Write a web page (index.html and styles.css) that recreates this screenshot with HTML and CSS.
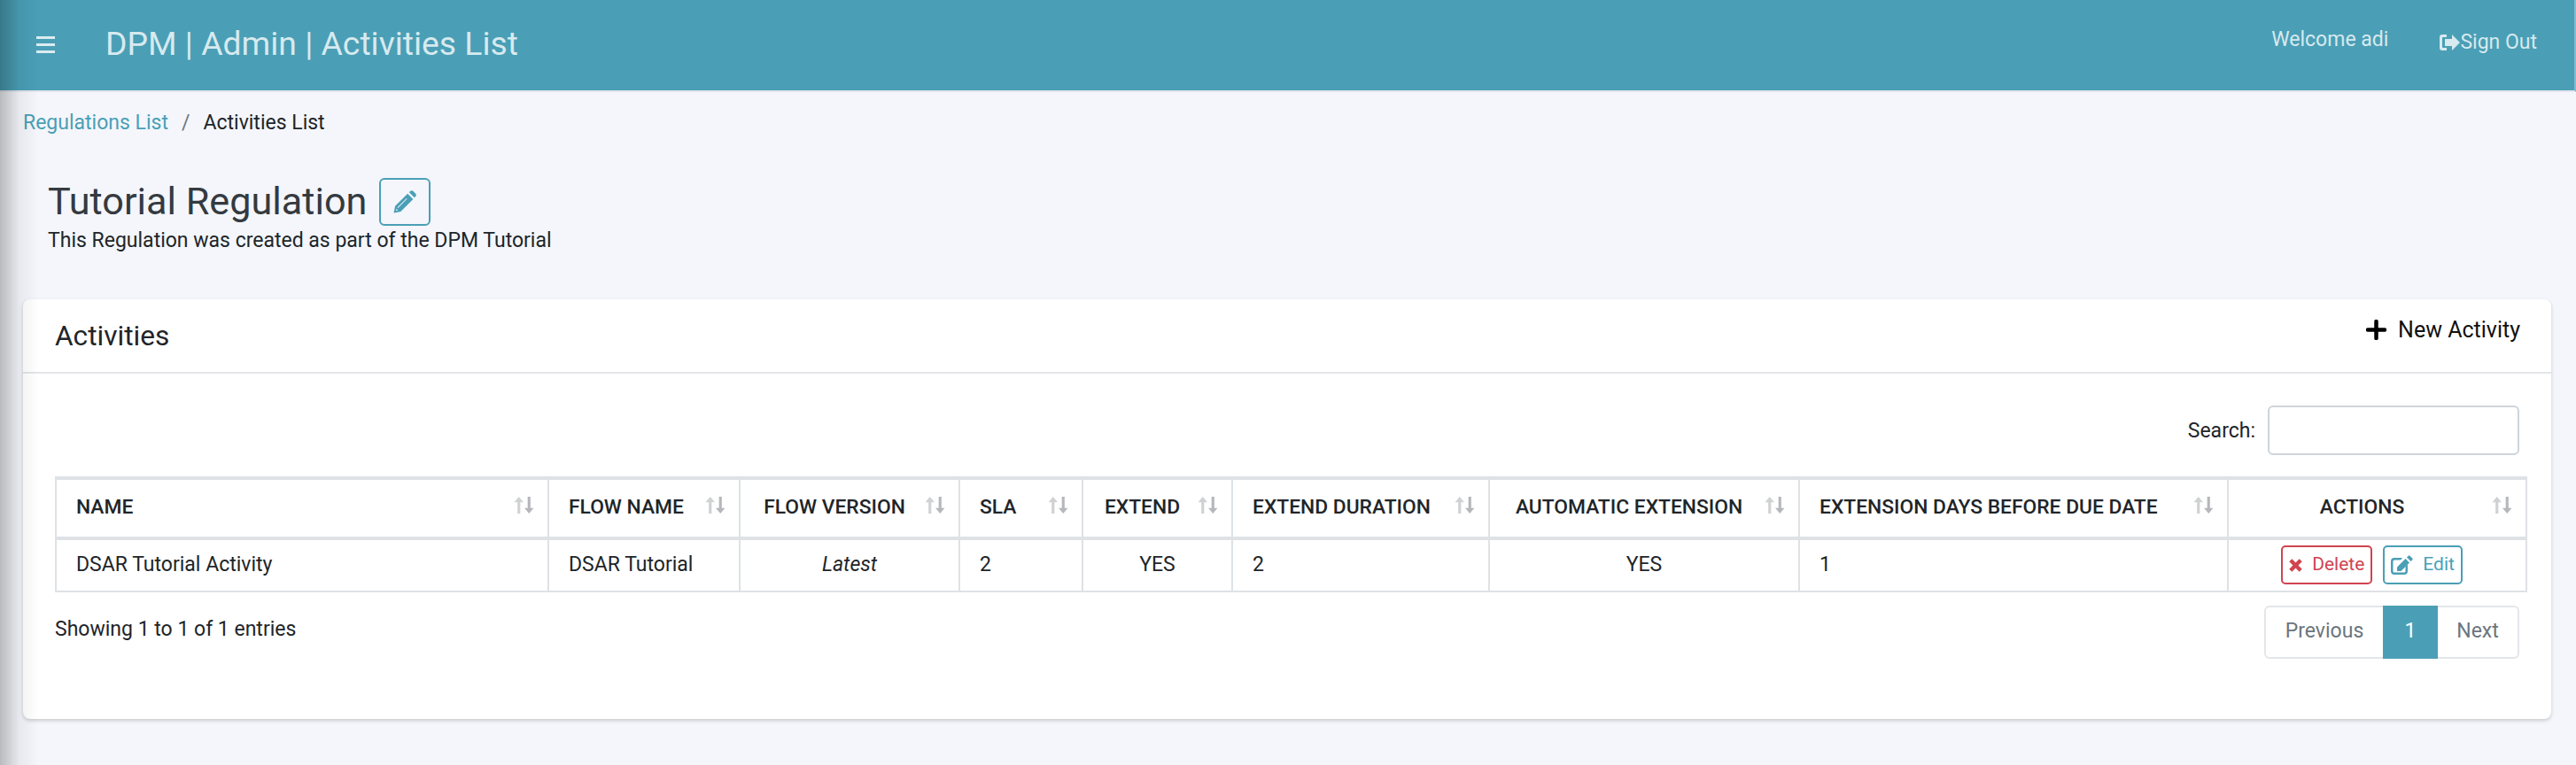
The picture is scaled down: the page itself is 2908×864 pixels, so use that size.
FILE: index.html
```html
<!DOCTYPE html>
<html lang="en">
<head>
    <meta charset="UTF-8">
    <meta name="viewport" content="width=device-width, initial-scale=1.0">
    <title>DPM | Admin | Activities List</title>
    <link rel="stylesheet" href="styles.css">
</head>
<body>
    <!-- Icons used more than once -->
    <svg class="sprite" aria-hidden="true">
        <symbol id="sort" viewBox="0 0 22 18">
            <path class="sort-up" d="M5.5 0 L10.5 6 H7 V18 H4 V6 H.5 Z"/>
            <path class="sort-down" d="M16.5 18 L11.5 12 H15 V0 H18 V12 H21.5 Z"/>
        </symbol>
    </svg>

    <header class="topbar">
        <div class="topbar-left">
            <span class="menu-icon"><i></i><i></i><i></i></span>
            <span class="topbar-title">DPM | Admin | Activities List</span>
        </div>
        <div class="topbar-right">
            <span class="welcome">Welcome adi</span>
            <a class="sign-out" href="#">
                <svg class="sign-out-icon" viewBox="0 0 23 18">
                    <path d="M8 0 V3 H4 Q3 3 3 4 V14 Q3 15 4 15 H8 V18 H3 Q0 18 0 15 V3 Q0 0 3 0 Z"/>
                    <path d="M14 0 L23 9 L14 18 V13 H6 V5 H14 Z"/>
                </svg>Sign Out
            </a>
        </div>
    </header>

    <main class="content">
        <nav class="breadcrumb">
            <a href="#">Regulations List</a>
            <span class="breadcrumb-sep">/</span>
            <span>Activities List</span>
        </nav>

        <section class="regulation">
            <div class="regulation-head">
                <h1>Tutorial Regulation</h1>
                <button class="icon-btn">
                    <svg class="pencil-icon" viewBox="0 0 25 25">
                        <path d="M.5 24.5 L2 17 L15.5 3.5 L21.5 9.5 L8 23 Z"/>
                        <path d="M17 2 L19 .5 Q20.2 -.2 21.2 .6 L24.4 3.8 Q25.2 4.8 24.5 6 L23 8 Z"/>
                        <path class="pencil-cut" d="M4.4 18.6 L14.4 8.6 L15 9.2 L5 19.2 Z M2.8 22.2 L3.4 20 L5 21.6 Z"/>
                    </svg>
                </button>
            </div>
            <p>This Regulation was created as part of the DPM Tutorial</p>
        </section>

        <section class="card">
            <div class="card-header">
                <h2>Activities</h2>
                <a class="new-link" href="#">
                    <svg class="plus-icon" viewBox="0 0 23 23"><path d="M11.5 2 V21 M2 11.5 H21"/></svg>
                    New Activity
                </a>
            </div>
            <div class="card-body">
                <div class="search-row">
                    <label for="search">Search:</label>
                    <input id="search" type="text">
                </div>

                <table class="data-table">
                    <colgroup>
                        <col class="col-name">
                        <col class="col-flow">
                        <col class="col-version">
                        <col class="col-sla">
                        <col class="col-extend">
                        <col class="col-duration">
                        <col class="col-auto">
                        <col class="col-days">
                        <col class="col-actions">
                    </colgroup>
                    <thead>
                        <tr>
                            <th>NAME<svg class="sort-icon"><use href="#sort"/></svg></th>
                            <th>FLOW NAME<svg class="sort-icon"><use href="#sort"/></svg></th>
                            <th class="centered">FLOW VERSION<svg class="sort-icon"><use href="#sort"/></svg></th>
                            <th>SLA<svg class="sort-icon"><use href="#sort"/></svg></th>
                            <th class="centered">EXTEND<svg class="sort-icon"><use href="#sort"/></svg></th>
                            <th>EXTEND DURATION<svg class="sort-icon"><use href="#sort"/></svg></th>
                            <th class="centered">AUTOMATIC EXTENSION<svg class="sort-icon"><use href="#sort"/></svg></th>
                            <th>EXTENSION DAYS BEFORE DUE DATE<svg class="sort-icon"><use href="#sort"/></svg></th>
                            <th class="centered">ACTIONS<svg class="sort-icon"><use href="#sort"/></svg></th>
                        </tr>
                    </thead>
                    <tbody>
                        <tr>
                            <td>DSAR Tutorial Activity</td>
                            <td>DSAR Tutorial</td>
                            <td class="centered"><em>Latest</em></td>
                            <td>2</td>
                            <td class="centered">YES</td>
                            <td>2</td>
                            <td class="centered">YES</td>
                            <td>1</td>
                            <td class="centered actions-cell">
                                <a class="btn btn-delete" href="#">
                                    <svg class="times-icon" viewBox="0 0 15 15"><path d="M1.8 1.8 L13.2 13.2 M13.2 1.8 L1.8 13.2"/></svg>
                                    Delete
                                </a>
                                <a class="btn btn-edit" href="#">
                                    <svg class="edit-icon" viewBox="0 0 25 22">
                                        <path d="M4 3 H13 L11 5.5 H4 Q2.5 5.5 2.5 7 V18 Q2.5 19.5 4 19.5 H15 Q16.5 19.5 16.5 18 V13 L19 10.5 V18 Q19 22 15 22 H4 Q0 22 0 18 V7 Q0 3 4 3 Z"/>
                                        <path d="M16.5 4 L21 8.5 L11.5 18 H7 V13.5 Z"/>
                                        <path d="M18 2.5 L19.8 .7 Q20.6 0 21.4 .7 L24.3 3.6 Q25 4.4 24.3 5.2 L22.5 7 Z"/>
                                    </svg>
                                    Edit
                                </a>
                            </td>
                        </tr>
                    </tbody>
                </table>

                <div class="table-footer">
                    <span class="entries">Showing 1 to 1 of 1 entries</span>
                    <div class="pagination">
                        <a class="page-link page-prev" href="#">Previous</a>
                        <a class="page-link page-current" href="#">1</a>
                        <a class="page-link page-next" href="#">Next</a>
                    </div>
                </div>
            </div>
        </section>
    </main>
</body>
</html>
```

FILE: styles.css
```css
* {
    box-sizing: border-box;
}
html, body {
    height: 100%;
}
body {
    margin: 0;
    font-family: Roboto, "Liberation Sans", sans-serif;
    font-size: 23px;
    line-height: 1.5;
    color: #212529;
    background-color: #f4f6fb;
    overflow: hidden;
}
/* shadow of the collapsed sidebar */
body::before {
    content: "";
    position: fixed;
    top: 0;
    bottom: 0;
    left: 0;
    width: 44px;
    background: linear-gradient(to right, rgba(0, 0, 0, .24), rgba(0, 0, 0, .05) 50%, rgba(0, 0, 0, 0));
    pointer-events: none;
    z-index: 5;
}
a {
    text-decoration: none;
}
.sprite {
    display: none;
}

/* Top bar */
.topbar {
    display: flex;
    justify-content: space-between;
    height: 104px;
    padding: 0 42px 0 41px;
    background-color: #4a9fb6;
    border-right: 2px solid rgba(255, 255, 255, .3);
    border-bottom: 2px solid #e3e6ee;
    color: rgba(255, 255, 255, .78);
}
.topbar-left {
    display: flex;
    align-items: center;
    gap: 57px;
    padding-bottom: 2px;
}
.menu-icon {
    display: flex;
    flex-direction: column;
    gap: 5px;
    width: 21px;
}
.menu-icon i {
    display: block;
    height: 3px;
    background-color: rgba(255, 255, 255, .8);
}
.topbar-title {
    font-size: 37.3px;
}
.topbar-right {
    display: flex;
    gap: 58px;
    padding-top: 28px;
}
.welcome {
    font-size: 23px;
}
.sign-out {
    margin-top: 3px;
    color: inherit;
}
.sign-out-icon {
    width: 23px;
    height: 18px;
    fill: currentColor;
    vertical-align: -2px;
}

/* Page content */
.content {
    padding: 0 28px 0 26px;
}
.breadcrumb {
    display: flex;
    gap: 15px;
    padding-top: 18px;
}
.breadcrumb a {
    color: #4a9fb6;
}
.breadcrumb-sep {
    color: #6c757d;
}
.regulation {
    padding: 44px 0 0 28px;
}
.regulation-head {
    display: flex;
    align-items: center;
    gap: 14px;
}
.regulation h1 {
    margin: 0;
    font-size: 43.2px;
    font-weight: 400;
    line-height: 1.2;
    color: #343a40;
}
.regulation p {
    margin: 2px 0 0;
    line-height: 30px;
}
.icon-btn {
    display: flex;
    align-items: center;
    justify-content: center;
    width: 58px;
    height: 54px;
    padding: 0;
    background: none;
    border: 2px solid #4a9fb6;
    border-radius: 6px;
}
.pencil-icon {
    width: 26px;
    height: 26px;
    fill: #4a9fb6;
}
.pencil-cut {
    fill: #f4f6fb;
}

/* Card */
.card {
    margin-top: 51px;
    height: 474px;
    background-color: #fff;
    border-radius: 8px;
    box-shadow: 0 2px 4px rgba(0, 0, 0, .18);
}
.card-header {
    display: flex;
    justify-content: space-between;
    height: 84px;
    padding: 0 35px 0 36px;
    border-bottom: 2px solid #e3e5e8;
}
.card-header h2 {
    margin: 0;
    padding-top: 21px;
    font-size: 31.6px;
    font-weight: 400;
    line-height: 1.3;
}
.new-link {
    display: flex;
    align-items: center;
    gap: 13px;
    height: 70px;
    font-size: 25px;
    color: #111;
}
.plus-icon {
    width: 23px;
    height: 23px;
    fill: none;
    stroke: #000;
    stroke-width: 4.5;
    stroke-linecap: round;
}
.card-body {
    padding: 0 28px 0 36px;
}
.search-row {
    display: flex;
    justify-content: flex-end;
    align-items: center;
    gap: 14px;
    padding: 36px 8px 24px 0;
}
.search-row label {
    margin-top: 4px;
}
.search-row input {
    width: 284px;
    height: 56px;
    border: 2px solid #ced4da;
    border-radius: 6px;
    background-color: #fff;
}

/* Table */
.data-table {
    width: 2789px;
    table-layout: fixed;
    border-collapse: collapse;
}
.col-name { width: 556px; }
.col-flow { width: 216px; }
.col-version { width: 248px; }
.col-sla { width: 139px; }
.col-extend { width: 169px; }
.col-duration { width: 290px; }
.col-auto { width: 350px; }
.col-days { width: 484px; }
.col-actions { width: 337px; }
.data-table th,
.data-table td {
    padding: 0 22px;
    border: 2px solid #dee2e6;
    text-align: left;
    white-space: nowrap;
}
.data-table th {
    position: relative;
    height: 68px;
    padding-right: 56px;
    border-top-width: 4px;
    border-bottom-width: 4px;
    font-size: 22.8px;
    font-weight: 500;
}
.data-table td {
    height: 60px;
}
.data-table .centered {
    text-align: center;
}
.sort-icon {
    position: absolute;
    top: 19px;
    right: 15px;
    width: 23px;
    height: 19px;
}
.sort-up {
    fill: #cfd1d3;
}
.sort-down {
    fill: #b5b7ba;
}
.data-table .actions-cell {
    padding-right: 34px;
    font-size: 0;
}

/* Row buttons */
.btn {
    display: inline-flex;
    align-items: center;
    height: 44px;
    padding: 0 7px;
    border: 2px solid;
    border-radius: 5px;
    font-size: 21px;
    vertical-align: middle;
}
.btn-delete {
    gap: 11px;
    color: #cf4450;
    border-color: #cf4450;
}
.btn-edit {
    gap: 11px;
    margin-left: 12px;
    color: #4a9fb6;
    border-color: #4a9fb6;
}
.times-icon {
    width: 15px;
    height: 15px;
    fill: none;
    stroke: currentColor;
    stroke-width: 4.4;
}
.edit-icon {
    width: 25px;
    height: 22px;
    fill: currentColor;
}

/* Below the table */
.table-footer {
    display: flex;
    justify-content: space-between;
    align-items: flex-start;
    padding: 15px 8px 0 0;
}
.entries {
    padding-top: 10px;
}
.pagination {
    display: flex;
    height: 60px;
}
.page-link {
    display: flex;
    align-items: center;
    justify-content: center;
    border: 2px solid #e3e6ea;
    color: #6c757d;
}
.page-prev {
    width: 134px;
    border-right: 0;
    border-radius: 6px 0 0 6px;
}
.page-current {
    width: 62px;
    background-color: #4a9fb6;
    border-color: #4a9fb6;
    color: #fff;
}
.page-next {
    width: 92px;
    border-left: 0;
    border-radius: 0 6px 6px 0;
}
```
